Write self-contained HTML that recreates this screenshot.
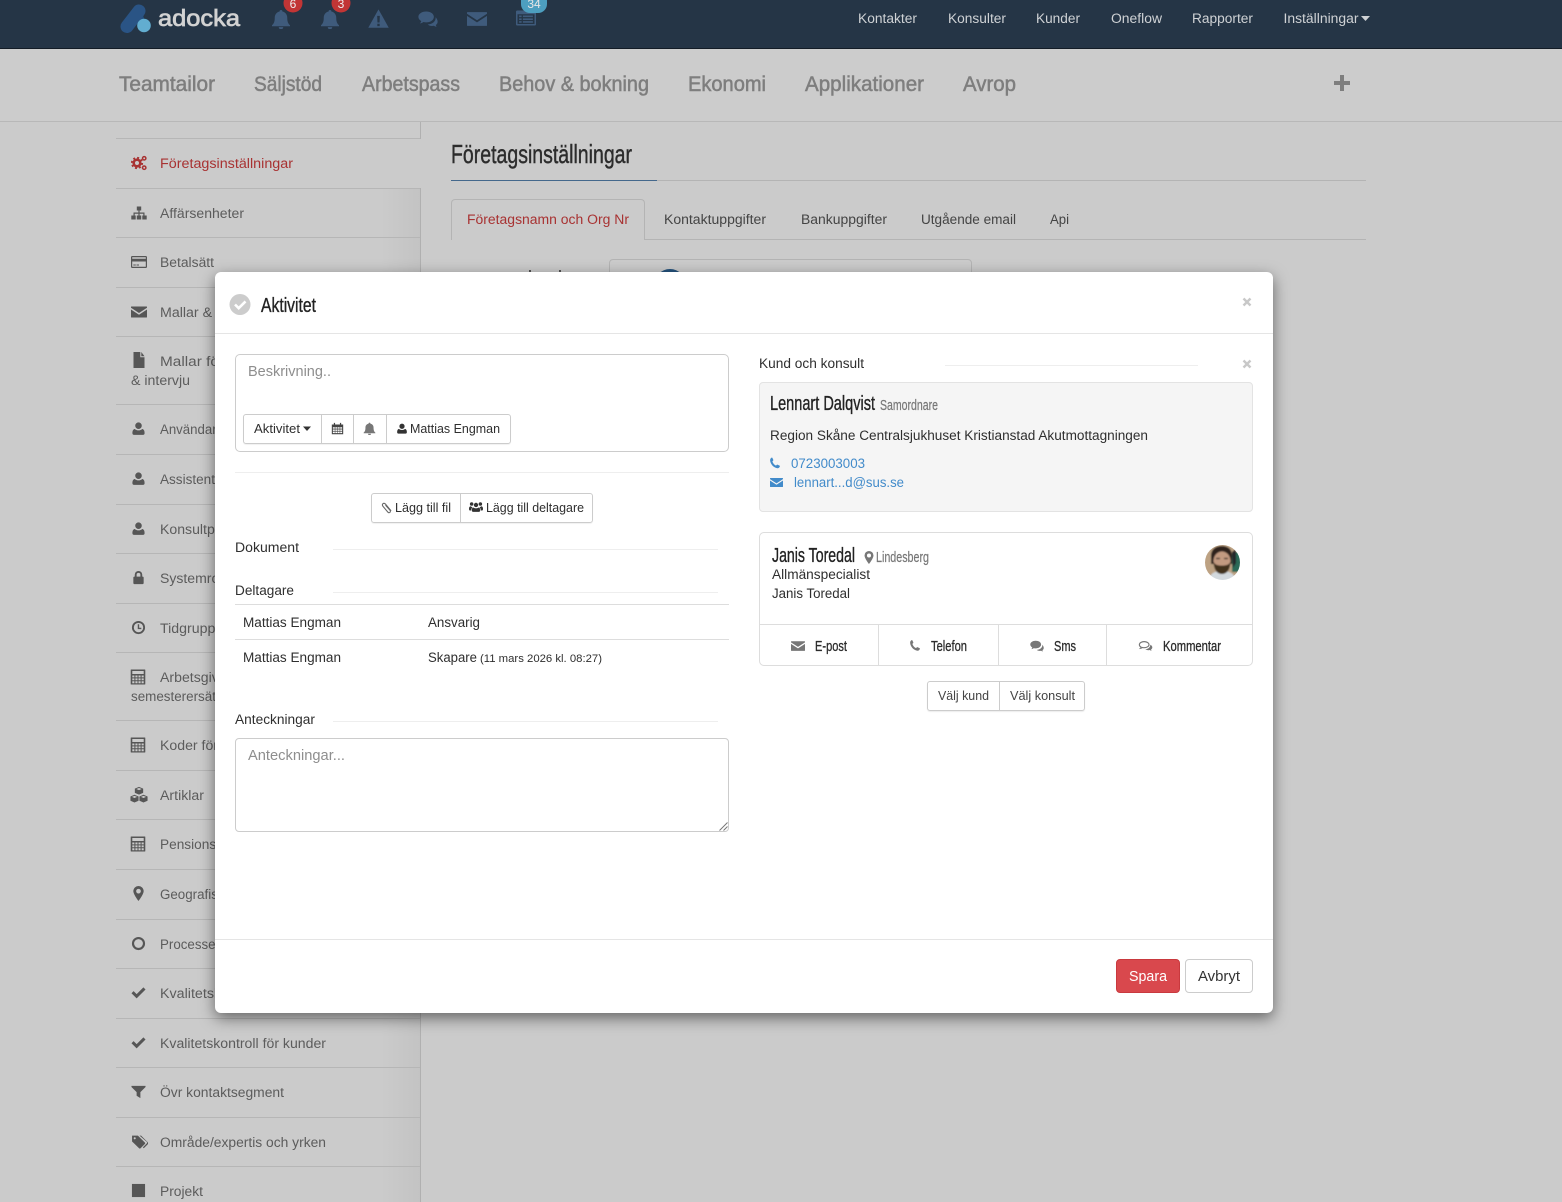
<!DOCTYPE html>
<html lang="sv"><head><meta charset="utf-8"><title>Företagsinställningar</title>
<style>
html,body{margin:0;padding:0;background:#cbcbcb;width:1562px;height:1202px;overflow:hidden}
body{position:relative;font-family:"Liberation Sans",sans-serif}
.b{position:absolute;box-sizing:border-box}
svg.l{position:absolute;left:0;top:0;width:1562px;height:1202px;overflow:visible}
text{font-family:"Liberation Sans",sans-serif;font-size:13.5px;fill:#2f2f2f}
.s text{fill:#5c5c5c}
.o{font-size:20px;fill:#222;stroke:#222;stroke-width:.35px}
.f{font-size:15px;fill:#2b2b2b;stroke:#2b2b2b;stroke-width:.3px}
.g{font-size:14.5px;fill:#777;stroke:#777;stroke-width:.2px}
use{fill:currentColor}
</style></head><body>
<svg width="0" height="0" style="position:absolute"><defs>
<symbol id="bell" viewBox="0 0 16 16"><path d="M8 .8a1.100 1.100 0 0 1 1.100 1.200C11.400 2.500 13 4.300 13 7c0 3.300.8 4.800 2.200 6v.8H.8V13C2.200 11.800 3 10.300 3 7c0-2.700 1.600-4.500 3.900-5A1.100 1.100 0 0 1 8 .8zM6.200 14.500h3.600a1.800 1.800 0 0 1-3.600 0z"/></symbol>
<symbol id="warn" viewBox="0 0 16 16"><path fill-rule="evenodd" d="M8 1l7.800 14H.2zM7 6l.2 5h1.600L9 6zM7.100 12v1.800h1.800V12z"/></symbol>
<symbol id="comments" viewBox="0 0 16 16"><path d="M6.500 2C3 2 .3 3.900.3 6.300c0 1.400.9 2.600 2.300 3.400-.2.700-.6 1.300-1 1.800 1-.1 2-.5 2.800-1.100.7.200 1.400.3 2.100.3 3.500 0 6.200-1.900 6.200-4.400S10 2 6.500 2zM14 6.500c.1.300.1.500.1.800 0 2.700-2.700 4.900-6.300 5.100.8.800 2.100 1.200 3.400 1.200.5 0 1-.1 1.500-.2.600.4 1.300.7 2.200.8-.3-.4-.6-.9-.7-1.400 1-.6 1.500-1.500 1.500-2.500 0-1.500-.7-2.900-1.700-3.800z"/></symbol>
<symbol id="commentso" viewBox="0 0 16 16"><path fill="none" stroke="currentColor" stroke-width="1.300" d="M6.500 3C3.500 3 1 4.500 1 6.500c0 1.100.7 2 1.900 2.700-.1.600-.4 1-.8 1.500.9-.1 1.600-.5 2.300-1 .7.100 1.300.2 2.100.2 3 0 5.500-1.500 5.500-3.400S9.500 3 6.500 3z"/><path d="M13.500 6.500c1.500.7 2.300 1.800 2.300 3 0 1-.6 1.900-1.500 2.500.1.500.4 1 .7 1.400-.9-.1-1.600-.4-2.200-.8-.5.100-1 .2-1.500.2-1.300 0-2.600-.4-3.400-1.200 3-.2 5.500-1.800 5.600-5.100z"/></symbol>
<symbol id="env" viewBox="0 0 16 16"><path d="M.5 2.500h15c.3 0 .5.2.5.5v.8L8 9 0 3.800V3c0-.3.2-.5.5-.5zM0 5.500l8 5.200 8-5.200V13c0 .3-.2.5-.5.5H.5C.2 13.500 0 13.300 0 13z"/></symbol>
<symbol id="list" viewBox="0 0 16 16"><path fill-rule="evenodd" d="M1 2h14a1 1 0 0 1 1 1v10a1 1 0 0 1-1 1H1a1 1 0 0 1-1-1V3a1 1 0 0 1 1-1zM1.200 5v7.800h13.600V5zM2.500 6h2v1.300h-2zM5.500 6h8v1.300h-8zM2.500 8.300h2v1.300h-2zM5.500 8.300h8v1.300h-8zM2.500 10.500h2v1.300h-2zM5.500 10.500h8v1.300h-8z"/></symbol>
<symbol id="cogs" viewBox="0 0 16 16"><g fill="none" stroke="currentColor"><circle cx="6" cy="8" r="3.300" stroke-width="2.600"/><circle cx="6" cy="8" r="5.200" stroke-width="1.800" stroke-dasharray="2 2.080"/><circle cx="13.200" cy="3.300" r="1.700" stroke-width="1.500"/><circle cx="13.200" cy="12.700" r="1.700" stroke-width="1.500"/></g></symbol>
<symbol id="sitemap" viewBox="0 0 16 16"><path d="M5.800 1.500h4.400v4H5.800zM.3 10.500h4.400v4H.3zM5.800 10.500h4.400v4H5.800zM11.300 10.500h4.400v4h-4.400zM7.400 5.500h1.200v2h4.900v3h-1.200V8.700H8.600v1.800H7.400V8.700H3.700v1.800H2.500v-3h4.900z"/></symbol>
<symbol id="card" viewBox="0 0 16 16"><path fill-rule="evenodd" d="M1.200 2h13.600c.7 0 1.200.5 1.200 1.200v9.600c0 .7-.5 1.200-1.200 1.200H1.200C.5 14 0 13.500 0 12.800V3.200C0 2.500.5 2 1.200 2zM1.200 7.500v5.300h13.600V7.500zM1.200 3.200v1.500h13.600V3.200zM2.300 10.500h2.500v1H2.300zM5.500 10.500h2.500v1H5.500z"/></symbol>
<symbol id="file" viewBox="0 0 16 16"><path d="M2.500 0h6.800v5.200h4.200V16H2.500zM10.300 0l3.200 4.200h-3.200z"/></symbol>
<symbol id="user" viewBox="0 0 16 16"><path d="M8 1.500a3.500 3.500 0 1 1 0 7 3.500 3.500 0 0 1 0-7zM4 8.500c1 1 2.500 1.500 4 1.500s3-.5 4-1.500c1.800.3 2.500 2 2.500 4.500 0 1-.7 1.800-1.700 1.800H3.200c-1 0-1.700-.8-1.700-1.800 0-2.500.7-4.200 2.500-4.500z"/></symbol>
<symbol id="lock" viewBox="0 0 16 16"><path fill-rule="evenodd" d="M4 7V5a4 4 0 0 1 8 0v2h.5c.5 0 1 .5 1 1v6c0 .5-.5 1-1 1h-9c-.5 0-1-.5-1-1V8c0-.5.5-1 1-1zM6 7h4V5a2 2 0 0 0-4 0z"/></symbol>
<symbol id="clock" viewBox="0 0 16 16"><path fill-rule="evenodd" d="M8 1a7 7 0 1 1 0 14A7 7 0 0 1 8 1zm0 2a5 5 0 1 0 0 10A5 5 0 0 0 8 3zM7.200 4.500h1.500v3.800H11v1.400H7.200z"/></symbol>
<symbol id="calc" viewBox="0 0 16 16"><path fill-rule="evenodd" d="M1.200 .5h13.600c.3 0 .5.200.5.500v14c0 .3-.2.500-.5.500H1.200c-.3 0-.5-.2-.5-.5V1c0-.3.2-.5.5-.5zM2.300 2v3h11.400V2zM2.300 6.500v1.900h2.100V6.500zM5.400 6.500v1.900h2.100V6.500zM8.500 6.500v1.900h2.100V6.500zM11.600 6.500v1.900h2.100V6.500zM2.300 9.400v1.900h2.100V9.400zM5.400 9.400v1.900h2.100V9.400zM8.500 9.400v1.900h2.100V9.400zM11.600 9.400v1.900h2.100V9.400zM2.300 12.300v1.900h2.100v-1.900zM5.400 12.300v1.900h2.100v-1.900zM8.500 12.300v1.900h2.100v-1.900zM11.600 12.300v1.900h2.100v-1.900z"/></symbol>
<symbol id="cubes" viewBox="0 0 16 16"><path fill-rule="evenodd" d="M8 .8l3.700 1.500v3.800L8 7.700 4.300 6.100V2.300zM5.600 2.700L8 3.700l2.400-1L8 1.800zM4 7.800l3.600 1.500v3.800L4 14.700.4 13.100V9.300zM1.700 9.700l2.300 1 2.300-1L4 8.800zM12 7.800l3.600 1.500v3.800L12 14.700l-3.600-1.600V9.300zM9.700 9.700l2.300 1 2.300-1L12 8.800z"/></symbol>
<symbol id="pin" viewBox="0 0 16 16"><path fill-rule="evenodd" d="M8 0a5.500 5.500 0 0 1 5.500 5.500C13.500 9 8 16 8 16S2.500 9 2.500 5.500A5.500 5.500 0 0 1 8 0zm0 3a2.500 2.500 0 1 0 0 5 2.500 2.500 0 0 0 0-5z"/></symbol>
<symbol id="ring" viewBox="0 0 16 16"><path fill-rule="evenodd" d="M8 1a7 7 0 1 1 0 14A7 7 0 0 1 8 1zm0 2.300a4.700 4.700 0 1 0 0 9.400 4.700 4.700 0 0 0 0-9.400z"/></symbol>
<symbol id="check" viewBox="0 0 16 16"><path d="M2.800 6.500L6 9.700 13.200 2.500 15.500 4.800 6 14.300.5 8.800z"/></symbol>
<symbol id="filter" viewBox="0 0 16 16"><path d="M.5 2h15v1.200L10 8.700V15l-4-2.500V8.700L.5 3.200z"/></symbol>
<symbol id="tags" viewBox="0 0 16 16"><path fill-rule="evenodd" d="M1 1.500h5.500L13 8a1 1 0 0 1 0 1.400L9 13.400a1 1 0 0 1-1.400 0L1 7zM3.500 3a1 1 0 1 0 0 2 1 1 0 0 0 0-2z"/><path d="M8 1.500h1.500L16 8a1 1 0 0 1 0 1.400l-4 4-.8-.8 3.700-3.800a1 1 0 0 0 0-1.400z"/></symbol>
<symbol id="square" viewBox="0 0 16 16"><path d="M1 1h14v14H1z"/></symbol>
<symbol id="phone" viewBox="0 0 16 16"><path d="M3.500.8c.4-.2.9 0 1 .4l1.200 2.500c.2.4.1.8-.2 1.100L4.500 5.800c.6 2.200 2.500 4.600 4.800 5.700l1.100-1c.3-.3.7-.4 1.100-.2l2.600 1.200c.4.200.5.600.4 1-.5 1.600-1.900 2.700-3.300 2.500C6 14.300 1.800 9.300 1.500 4.500 1.400 2.900 2.200 1.500 3.500.8z"/></symbol>
<symbol id="cal" viewBox="0 0 16 16"><path fill-rule="evenodd" d="M1 3h2.500V1h1.500v2h6V1h1.500v2H15v12H1zM2.300 6.500v1.700h2.400V6.500zM5.300 6.500v1.700h2.400V6.500zM8.300 6.500v1.700h2.400V6.500zM11.300 6.500v1.700h2.400V6.500zM2.300 9.200v1.700h2.400V9.200zM5.300 9.200v1.700h2.400V9.200zM8.300 9.200v1.700h2.400V9.200zM11.300 9.200v1.700h2.400V9.200zM2.300 11.900v1.800h2.400v-1.800zM5.300 11.900v1.800h2.400v-1.800zM8.300 11.900v1.800h2.400v-1.800zM11.300 11.900v1.800h2.400v-1.800z"/></symbol>
<symbol id="clip" viewBox="0 0 16 16"><path fill="none" stroke="currentColor" stroke-width="1.400" d="M13.500 12.500L6 3.500C5 2.300 3.500 2 2.500 3s-.7 2.400.2 3.500L9 14c.8 1 2 1.200 2.900.5s.8-1.900 0-2.900L6 4.800"/></symbol>
<symbol id="users" viewBox="0 0 16 16"><path d="M8 3.200a2.500 2.500 0 1 1 0 5 2.500 2.500 0 0 1 0-5zM3 2.500a2 2 0 1 1 0 4 2 2 0 0 1 0-4zM13 2.500a2 2 0 1 1 0 4 2 2 0 0 1 0-4zM0 10c0-1.500.6-2.800 2-2.800.7.600 1.200 1 2 1.200-1 .8-1.500 2-1.500 3.600H1c-.6 0-1-.4-1-2zM16 10c0 1.600-.4 2-1 2h-1.500c0-1.600-.5-2.800-1.500-3.600.8-.2 1.300-.6 2-1.200 1.400 0 2 1.300 2 2.800zM5 8.600c.8.600 1.800 1 3 1s2.200-.4 3-1c1.300.2 1.800 1.500 1.800 3 0 1.400-.6 2-1.500 2H4.700c-.9 0-1.500-.6-1.500-2 0-1.500.5-2.800 1.800-3z"/></symbol>
<filter id="soft"><feGaussianBlur stdDeviation=".7"/></filter>
</defs></svg>

<!-- top bar -->
<div class="b" style="left:0;top:0;width:1562px;height:49px;background:#253546;border-bottom:1px solid #131c26"></div>
<!-- sub nav -->
<div class="b" style="left:0;top:49px;width:1562px;height:73px;background:#cccccc;border-bottom:1px solid #b8b8b8"></div>
<!-- sidebar gradient and right border -->
<div class="b" style="left:380px;top:188px;width:40px;height:1014px;background:linear-gradient(90deg,rgba(0,0,0,0),rgba(0,0,0,.04))"></div>
<div class="b" style="left:420px;top:122px;width:1px;height:17px;background:#b0b0b0"></div>
<div class="b" style="left:420px;top:188px;width:1px;height:1014px;background:#b0b0b0"></div>
<!-- page tabs -->
<div class="b" style="left:451px;top:180px;width:915px;height:1px;background:#b4b4b4"></div>
<div class="b" style="left:451px;top:180px;width:206px;height:1px;background:#44688c"></div>
<div class="b" style="left:451px;top:239px;width:915px;height:1px;background:#b4b4b4"></div>
<div class="b" style="left:451px;top:199px;width:194px;height:41px;background:#cbcbcb;border:1px solid #b4b4b4;border-bottom:0;border-radius:4px 4px 0 0"></div>
<div class="b" style="left:609px;top:259px;width:363px;height:20px;border:1px solid #b4b4b4;border-radius:4px"></div>
<div class="b" style="left:654px;top:269px;width:32px;height:32px;border-radius:50%;background:#24527c"></div>
<div class="b" style="left:529px;top:270px;width:2px;height:2px;background:#555"></div>
<div class="b" style="left:559px;top:270px;width:2px;height:2px;background:#555"></div>

<svg class="l s" viewBox="0 0 1562 1202">
<!-- logo -->
<path d="M139 11.500L144 26" stroke="#24507f" stroke-width="5" fill="none"/>
<path d="M127 26.500L139 11" stroke="#2a5485" stroke-width="13" stroke-linecap="round" fill="none"/>
<circle cx="144" cy="25.500" r="6.800" fill="#62add0"/>
<text x="158" y="26" textLength="82" lengthAdjust="spacingAndGlyphs" style="font-size:23px;fill:#d2d2d2;stroke:#d2d2d2;stroke-width:.7px">adocka</text>
<!-- top icons -->
<g style="color:#3f5b7c">
<use href="#bell" x="271" y="9" width="20" height="20"/>
<use href="#bell" x="320" y="9" width="20" height="20"/>
<use href="#warn" x="368" y="8" width="21" height="21"/>
<use href="#comments" x="418" y="9" width="20" height="20"/>
<use href="#env" x="467" y="9" width="20" height="20"/>
<use href="#list" x="516" y="8" width="20" height="20"/>
</g>
<circle cx="293" cy="3" r="9.500" fill="#c23535"/><text x="293" y="8" text-anchor="middle" style="font-size:12px;fill:#eee">6</text>
<circle cx="341" cy="3" r="9.500" fill="#c23535"/><text x="341" y="8" text-anchor="middle" style="font-size:12px;fill:#eee">3</text>
<rect x="521" y="-8" width="26" height="21" rx="9" fill="#4d9fc0"/><text x="534" y="8" text-anchor="middle" style="font-size:12px;fill:#e6e6e6">34</text>
<!-- top nav -->
<g class="tn">
<text x="858" y="23" textLength="59" lengthAdjust="spacingAndGlyphs" style="fill:#cfd2d5">Kontakter</text>
<text x="948" y="23" textLength="58" lengthAdjust="spacingAndGlyphs" style="fill:#cfd2d5">Konsulter</text>
<text x="1036" y="23" textLength="44" lengthAdjust="spacingAndGlyphs" style="fill:#cfd2d5">Kunder</text>
<text x="1111" y="23" textLength="51" lengthAdjust="spacingAndGlyphs" style="fill:#cfd2d5">Oneflow</text>
<text x="1192" y="23" textLength="61" lengthAdjust="spacingAndGlyphs" style="fill:#cfd2d5">Rapporter</text>
<text x="1283.500" y="23" textLength="75" lengthAdjust="spacingAndGlyphs" style="fill:#cfd2d5">Inställningar</text>
<path d="M1361 16h9l-4.500 5z" fill="#cfd2d5"/>
</g>
<!-- sub nav text -->
<g>
<text x="119" y="91" textLength="96" lengthAdjust="spacingAndGlyphs" style="font-size:21px;fill:#7e7e7e;stroke:#7e7e7e;stroke-width:.5px">Teamtailor</text>
<text x="254" y="91" textLength="68" lengthAdjust="spacingAndGlyphs" style="font-size:21px;fill:#7e7e7e;stroke:#7e7e7e;stroke-width:.5px">Säljstöd</text>
<text x="362" y="91" textLength="98" lengthAdjust="spacingAndGlyphs" style="font-size:21px;fill:#7e7e7e;stroke:#7e7e7e;stroke-width:.5px">Arbetspass</text>
<text x="499" y="91" textLength="150" lengthAdjust="spacingAndGlyphs" style="font-size:21px;fill:#7e7e7e;stroke:#7e7e7e;stroke-width:.5px">Behov &amp; bokning</text>
<text x="688" y="91" textLength="78" lengthAdjust="spacingAndGlyphs" style="font-size:21px;fill:#7e7e7e;stroke:#7e7e7e;stroke-width:.5px">Ekonomi</text>
<text x="805" y="91" textLength="119" lengthAdjust="spacingAndGlyphs" style="font-size:21px;fill:#7e7e7e;stroke:#7e7e7e;stroke-width:.5px">Applikationer</text>
<text x="963" y="91" textLength="53" lengthAdjust="spacingAndGlyphs" style="font-size:21px;fill:#7e7e7e;stroke:#7e7e7e;stroke-width:.5px">Avrop</text>
</g>
<path d="M1340 76h4v6h6v4h-6v6h-4v-6h-6v-4h6z" fill="#7e7e7e" transform="translate(0 -1)"/>
<!-- sidebar lines -->
<g fill="#b6b6b6">
<rect x="116" y="138" width="304" height="1"/><rect x="116" y="188" width="304" height="1"/><rect x="116" y="237" width="304" height="1"/><rect x="116" y="287" width="304" height="1"/><rect x="116" y="336" width="304" height="1"/><rect x="116" y="404" width="304" height="1"/><rect x="116" y="454" width="304" height="1"/><rect x="116" y="504" width="304" height="1"/><rect x="116" y="553" width="304" height="1"/><rect x="116" y="603" width="304" height="1"/><rect x="116" y="652" width="304" height="1"/><rect x="116" y="720" width="304" height="1"/><rect x="116" y="770" width="304" height="1"/><rect x="116" y="819" width="304" height="1"/><rect x="116" y="869" width="304" height="1"/><rect x="116" y="919" width="304" height="1"/><rect x="116" y="968" width="304" height="1"/><rect x="116" y="1018" width="304" height="1"/><rect x="116" y="1067" width="304" height="1"/><rect x="116" y="1117" width="304" height="1"/><rect x="116" y="1166" width="304" height="1"/>
</g>
<!-- sidebar icons -->
<g style="color:#565656">
<use href="#cogs" x="131" y="155" width="16" height="16" style="color:#a83232"/>
<use href="#sitemap" x="131" y="205" width="16" height="16"/>
<use href="#card" x="131" y="254" width="16" height="16"/>
<use href="#env" x="131" y="304" width="16" height="16"/>
<use href="#file" x="131" y="352" width="16" height="16"/>
<use href="#user" x="131" y="421" width="15" height="15"/>
<use href="#user" x="131" y="471" width="15" height="15"/>
<use href="#user" x="131" y="521" width="15" height="15"/>
<use href="#lock" x="131" y="570" width="15" height="15"/>
<use href="#clock" x="131" y="620" width="15" height="15"/>
<use href="#calc" x="130" y="669" width="16" height="16"/>
<use href="#calc" x="130" y="737" width="16" height="16"/>
<use href="#cubes" x="130" y="786" width="18" height="18"/>
<use href="#calc" x="130" y="836" width="16" height="16"/>
<use href="#pin" x="131" y="886" width="15" height="15"/>
<use href="#ring" x="131" y="936" width="15" height="15"/>
<use href="#check" x="131" y="985" width="15" height="15"/>
<use href="#check" x="131" y="1035" width="15" height="15"/>
<use href="#filter" x="131" y="1084" width="15" height="15"/>
<use href="#tags" x="131" y="1134" width="17" height="17"/>
<use href="#square" x="131" y="1183" width="15" height="15"/>
</g>
<!-- sidebar text -->
<text x="160" y="168" textLength="133" lengthAdjust="spacingAndGlyphs" style="fill:#a83232">Företagsinställningar</text>
<text x="160" y="218" textLength="84" lengthAdjust="spacingAndGlyphs">Affärsenheter</text>
<text x="160" y="267" textLength="54" lengthAdjust="spacingAndGlyphs">Betalsätt</text>
<text x="160" y="317" textLength="82" lengthAdjust="spacingAndGlyphs">Mallar &amp; mejl</text>
<text x="160" y="366" textLength="64" lengthAdjust="spacingAndGlyphs">Mallar för</text>
<text x="131" y="385" textLength="59" lengthAdjust="spacingAndGlyphs">&amp; intervju</text>
<text x="160" y="434" textLength="64" lengthAdjust="spacingAndGlyphs">Användare</text>
<text x="160" y="484" textLength="67" lengthAdjust="spacingAndGlyphs">Assistenter</text>
<text x="160" y="534" textLength="90" lengthAdjust="spacingAndGlyphs">Konsultprofiler</text>
<text x="160" y="583" textLength="78" lengthAdjust="spacingAndGlyphs">Systemroller</text>
<text x="160" y="633" textLength="68" lengthAdjust="spacingAndGlyphs">Tidgrupper</text>
<text x="160" y="682" textLength="105" lengthAdjust="spacingAndGlyphs">Arbetsgivaravgift</text>
<text x="131" y="701" textLength="114" lengthAdjust="spacingAndGlyphs">semesterersättning</text>
<text x="160" y="750" textLength="58" lengthAdjust="spacingAndGlyphs">Koder för</text>
<text x="160" y="800" textLength="44" lengthAdjust="spacingAndGlyphs">Artiklar</text>
<text x="160" y="849" textLength="85" lengthAdjust="spacingAndGlyphs">Pensionsavtal</text>
<text x="160" y="899" textLength="72" lengthAdjust="spacingAndGlyphs">Geografiska</text>
<text x="160" y="949" textLength="60" lengthAdjust="spacingAndGlyphs">Processer</text>
<text x="160" y="998" textLength="100" lengthAdjust="spacingAndGlyphs">Kvalitetskontroll</text>
<text x="160" y="1048" textLength="166" lengthAdjust="spacingAndGlyphs">Kvalitetskontroll för kunder</text>
<text x="160" y="1097" textLength="124" lengthAdjust="spacingAndGlyphs">Övr kontaktsegment</text>
<text x="160" y="1147" textLength="166" lengthAdjust="spacingAndGlyphs">Område/expertis och yrken</text>
<text x="160" y="1196" textLength="43" lengthAdjust="spacingAndGlyphs">Projekt</text>
<!-- page -->
<text x="451" y="163" textLength="181" lengthAdjust="spacingAndGlyphs" style="font-size:26px;fill:#2c2c2c;stroke:#2c2c2c;stroke-width:.4px">Företagsinställningar</text>
<text x="467" y="224" textLength="162" lengthAdjust="spacingAndGlyphs" style="fill:#a83232">Företagsnamn och Org Nr</text>
<text x="664" y="224" textLength="102" lengthAdjust="spacingAndGlyphs" style="fill:#444">Kontaktuppgifter</text>
<text x="801" y="224" textLength="86" lengthAdjust="spacingAndGlyphs" style="fill:#444">Bankuppgifter</text>
<text x="921" y="224" textLength="95" lengthAdjust="spacingAndGlyphs" style="fill:#444">Utgående email</text>
<text x="1050" y="224" textLength="19" lengthAdjust="spacingAndGlyphs" style="fill:#444">Api</text>
</svg>

<!-- modal -->
<div class="b" style="left:215px;top:272px;width:1058px;height:741px;background:#fff;border-radius:6px;box-shadow:0 5px 15px rgba(0,0,0,.5)"></div>
<div class="b" style="left:215px;top:333px;width:1058px;height:1px;background:#e5e5e5"></div>
<div class="b" style="left:215px;top:939px;width:1058px;height:1px;background:#e5e5e5"></div>
<!-- left column boxes -->
<div class="b" style="left:235px;top:354px;width:494px;height:98px;border:1px solid #ccc;border-radius:5px"></div>
<div class="b" style="left:243px;top:414px;width:268px;height:30px;border:1px solid #ccc;border-radius:3px;box-shadow:0 1px 1px rgba(0,0,0,.06)"></div>
<div class="b" style="left:321px;top:414px;width:1px;height:30px;background:#ccc"></div>
<div class="b" style="left:353px;top:414px;width:1px;height:30px;background:#ccc"></div>
<div class="b" style="left:386px;top:414px;width:1px;height:30px;background:#ccc"></div>
<div class="b" style="left:235px;top:472px;width:494px;height:1px;background:#eee"></div>
<div class="b" style="left:371px;top:493px;width:222px;height:30px;border:1px solid #ccc;border-radius:3px;box-shadow:0 1px 1px rgba(0,0,0,.06)"></div>
<div class="b" style="left:460px;top:493px;width:1px;height:30px;background:#ccc"></div>
<div class="b" style="left:333px;top:549px;width:385px;height:1px;background:#eee"></div>
<div class="b" style="left:333px;top:592px;width:385px;height:1px;background:#eee"></div>
<div class="b" style="left:235px;top:604px;width:494px;height:1px;background:#ddd"></div>
<div class="b" style="left:235px;top:639px;width:494px;height:1px;background:#ddd"></div>
<div class="b" style="left:333px;top:721px;width:385px;height:1px;background:#eee"></div>
<div class="b" style="left:235px;top:738px;width:494px;height:94px;border:1px solid #ccc;border-radius:4px"></div>
<!-- right column boxes -->
<div class="b" style="left:945px;top:365px;width:253px;height:1px;background:#eee"></div>
<div class="b" style="left:759px;top:382px;width:494px;height:130px;background:#f5f5f5;border:1px solid #e3e3e3;border-radius:4px"></div>
<div class="b" style="left:759px;top:532px;width:494px;height:134px;border:1px solid #ddd;border-radius:5px"></div>
<div class="b" style="left:760px;top:624px;width:492px;height:1px;background:#ddd"></div>
<div class="b" style="left:878px;top:625px;width:1px;height:40px;background:#ddd"></div>
<div class="b" style="left:998px;top:625px;width:1px;height:40px;background:#ddd"></div>
<div class="b" style="left:1106px;top:625px;width:1px;height:40px;background:#ddd"></div>
<div class="b" style="left:927px;top:681px;width:158px;height:30px;border:1px solid #ccc;border-radius:3px;box-shadow:0 1px 1px rgba(0,0,0,.08)"></div>
<div class="b" style="left:999px;top:681px;width:1px;height:30px;background:#ccc"></div>
<!-- footer buttons -->
<div class="b" style="left:1116px;top:959px;width:64px;height:34px;background:#d9484d;border:1px solid #c9393e;border-radius:4px"></div>
<div class="b" style="left:1185px;top:959px;width:68px;height:34px;background:#fff;border:1px solid #ccc;border-radius:4px"></div>

<svg class="l" viewBox="0 0 1562 1202">
<circle cx="240" cy="304.500" r="10.500" fill="#cccccc"/>
<path d="M235 304.500l3.700 3.700 6.800-6.800" fill="none" stroke="#fff" stroke-width="2.600"/>
<text x="261" y="312" textLength="55" lengthAdjust="spacingAndGlyphs" class="o">Aktivitet</text>
<path d="M1243.500 298.500l7 7m0-7l-7 7M1243.500 360.500l7 7m0-7l-7 7" stroke="#c8c8c8" stroke-width="2.400" fill="none"/>

<text x="248" y="376" textLength="83" lengthAdjust="spacingAndGlyphs" style="font-size:14.5px;fill:#8e8e8e">Beskrivning..</text>
<text x="254" y="433" textLength="46" style="font-size:12.5px" lengthAdjust="spacingAndGlyphs">Aktivitet</text>
<path d="M303 426.500h8l-4 4.500z" fill="#333"/>
<g style="color:#444"><use href="#cal" x="331" y="422" width="13" height="13"/></g>
<g style="color:#777"><use href="#bell" x="363" y="422" width="13" height="13"/></g>
<g style="color:#333"><use href="#user" x="396" y="422" width="12" height="13"/></g>
<text x="410" y="433" textLength="90" style="font-size:12.5px" lengthAdjust="spacingAndGlyphs">Mattias Engman</text>

<g style="color:#666"><use href="#clip" x="381" y="501" width="12" height="13"/></g>
<text x="395" y="512" textLength="56" style="font-size:12.5px" lengthAdjust="spacingAndGlyphs">Lägg till fil</text>
<g style="color:#333"><use href="#users" x="469" y="500" width="14" height="14"/></g>
<text x="486" y="512" textLength="98" style="font-size:12.5px" lengthAdjust="spacingAndGlyphs">Lägg till deltagare</text>

<text x="235" y="552" textLength="64" lengthAdjust="spacingAndGlyphs">Dokument</text>
<text x="235" y="595" textLength="59" lengthAdjust="spacingAndGlyphs">Deltagare</text>
<text x="243" y="627" textLength="98" lengthAdjust="spacingAndGlyphs">Mattias Engman</text>
<text x="428" y="627" textLength="52" lengthAdjust="spacingAndGlyphs">Ansvarig</text>
<text x="243" y="662" textLength="98" lengthAdjust="spacingAndGlyphs">Mattias Engman</text>
<text x="428" y="662" textLength="49" lengthAdjust="spacingAndGlyphs">Skapare</text>
<text x="480" y="662" textLength="122" lengthAdjust="spacingAndGlyphs" style="font-size:11px">(11 mars 2026 kl. 08:27)</text>
<text x="235" y="724" textLength="80" lengthAdjust="spacingAndGlyphs">Anteckningar</text>
<text x="248" y="760" textLength="97" lengthAdjust="spacingAndGlyphs" style="font-size:14.5px;fill:#8e8e8e">Anteckningar...</text>
<path d="M719.500 830.500l8-8m-4 8l4-4" stroke="#777" stroke-width="1" fill="none"/>

<text x="759" y="368" textLength="105" lengthAdjust="spacingAndGlyphs">Kund och konsult</text>
<text x="770" y="410" textLength="105" lengthAdjust="spacingAndGlyphs" class="o">Lennart Dalqvist</text>
<text x="880" y="410" textLength="58" lengthAdjust="spacingAndGlyphs" class="g">Samordnare</text>
<text x="770" y="440" textLength="378" lengthAdjust="spacingAndGlyphs">Region Skåne Centralsjukhuset Kristianstad Akutmottagningen</text>
<g style="color:#428bca"><use href="#phone" x="769" y="457" width="12" height="12"/><use href="#env" x="770" y="476" width="13" height="13"/></g>
<text x="791" y="468" textLength="74" lengthAdjust="spacingAndGlyphs" style="fill:#428bca">0723003003</text>
<text x="794" y="487" textLength="110" lengthAdjust="spacingAndGlyphs" style="fill:#428bca">lennart...d@sus.se</text>

<text x="772" y="562" textLength="83" lengthAdjust="spacingAndGlyphs" class="o">Janis Toredal</text>
<g style="color:#777"><use href="#pin" x="862" y="551" width="14" height="13"/></g>
<text x="876" y="562" textLength="53" lengthAdjust="spacingAndGlyphs" class="g">Lindesberg</text>
<text x="772" y="579" textLength="98" lengthAdjust="spacingAndGlyphs">Allmänspecialist</text>
<text x="772" y="598" textLength="78" lengthAdjust="spacingAndGlyphs">Janis Toredal</text>
<!-- avatar -->
<clipPath id="av"><circle cx="1222.500" cy="562.500" r="17.500"/></clipPath>
<g clip-path="url(#av)">
<g filter="url(#soft)">
<rect x="1203" y="543" width="39" height="39" fill="#bda283"/>
<rect x="1232" y="552" width="9" height="20" fill="#2a6b58"/>
<path d="M1209 582c0-9 6-11 13-11s13 2 14 11z" fill="#d3d9de"/>
<path d="M1211 556c0-7 5-10 11-10s10 3 10 10v8h-21z" fill="#2d241e"/>
<ellipse cx="1222" cy="561" rx="8.500" ry="9.500" fill="#c29a80"/>
<path d="M1213.500 562c.5 9 4.500 12 8.500 12s8-3 8.500-12c-2 3-4 3.500-8.500 3.500s-6.500-.5-8.500-3.500z" fill="#43301f"/>
<path d="M1216 558.500h4M1224 558.500h4" stroke="#3a2a20" stroke-width="1.200"/>
<path d="M1232 552l4-3v14l-3 5z" fill="#26282a"/>
</g>
</g>
<g style="color:#777">
<use href="#env" x="791" y="639" width="14" height="14"/>
<use href="#phone" x="909" y="639" width="12" height="13"/>
<use href="#comments" x="1030" y="639" width="14" height="14"/>
<use href="#commentso" x="1138" y="639" width="15" height="14"/>
</g>
<text x="815" y="651" textLength="32" lengthAdjust="spacingAndGlyphs" class="f">E-post</text>
<text x="931" y="651" textLength="36" lengthAdjust="spacingAndGlyphs" class="f">Telefon</text>
<text x="1054" y="651" textLength="22" lengthAdjust="spacingAndGlyphs" class="f">Sms</text>
<text x="1163" y="651" textLength="58" lengthAdjust="spacingAndGlyphs" class="f">Kommentar</text>
<text x="938" y="700" textLength="51" lengthAdjust="spacingAndGlyphs" style="font-size:12.5px;fill:#444">Välj kund</text>
<text x="1010" y="700" textLength="65" lengthAdjust="spacingAndGlyphs" style="font-size:12.5px;fill:#444">Välj konsult</text>
<text x="1129" y="981" textLength="38" lengthAdjust="spacingAndGlyphs" style="font-size:14.5px;fill:#fff">Spara</text>
<text x="1198" y="981" textLength="42" lengthAdjust="spacingAndGlyphs" style="font-size:14.5px;fill:#333">Avbryt</text>
</svg>
</body></html>
